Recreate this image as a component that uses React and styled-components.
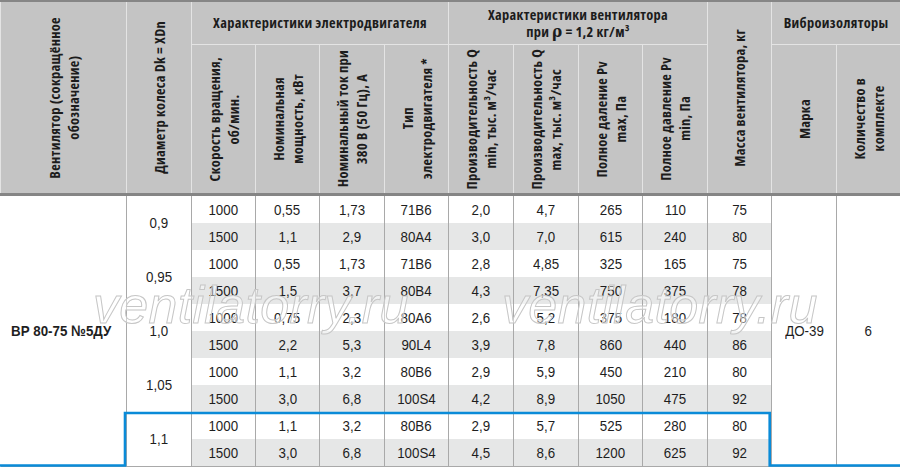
import React from 'react';
import styled, { createGlobalStyle } from 'styled-components';

const GlobalStyle = createGlobalStyle`
  html, body {
    margin: 0;
    padding: 0;
    background: #ffffff;
  }
  body {
    font-family: "Liberation Sans", Arial, sans-serif;
  }
`;

const Wrapper = styled.div`
  position: relative;
  width: 900px;
  height: 467px;
  overflow: hidden;
`;

const Table = styled.table`
  width: 900px;
  border-collapse: collapse;
  table-layout: fixed;
  border-top: 2px solid #868686;
`;

const HeadRow = styled.tr`
  height: ${p => p.$h}px;
`;

const HeadCell = styled.th`
  background: #c4c4c4;
  border: 1px solid #e4e4e4;
  border-top: none;
  padding: 0;
  color: #1c1c1c;
  font-family: "Open Sans", "Liberation Sans", sans-serif;
  font-stretch: 75%;
  font-weight: 700;
  font-size: 14.4px;
  letter-spacing: 0.3px;
  line-height: 17px;
  text-align: center;
  vertical-align: middle;
  border-bottom: ${p => (p.$last ? '3px solid #858585' : '1px solid #e4e4e4')};
`;

const VBox = styled.div`
  height: ${p => p.$h}px;
  display: flex;
  align-items: center;
  justify-content: center;
  overflow: hidden;
`;

const VText = styled.div`
  writing-mode: vertical-rl;
  transform: rotate(180deg);
  text-align: center;
  line-height: 19px;
  white-space: nowrap;
`;

const Rho = styled.span`
  font-size: 17px;
  font-family: "DejaVu Serif", serif;
`;

const Row = styled.tr`
  height: 27px;
`;

const Cell = styled.td`
  padding: 0;
  height: 27px;
  background: ${p => (p.$shade ? '#e6e7e7' : '#ffffff')};
  border-left: 1px solid #a9a9a9;
  border-right: 1px solid #a9a9a9;
  border-bottom: ${p => (p.$bottom ? '1px solid #a9a9a9' : 'none')};
  color: #1e1e1e;
  font-family: "Liberation Sans", Arial, sans-serif;
  font-size: 15.5px;
  text-align: center;
  vertical-align: middle;
  white-space: nowrap;
`;

const NameCell = styled(Cell)`
  text-align: left;
  padding-left: 10px;
  font-weight: 700;
  font-size: 15.5px;
  border-left: none;
`;

/* narrow face: the sheet uses a condensed Helvetica */
const Narrow = styled.span`
  display: inline-block;
  transform: scaleX(0.86);
  transform-origin: ${p => (p.$left ? 'left center' : 'center')};
`;

const Watermark = styled.div`
  position: absolute;
  top: 279px;
  left: ${p => p.$x}px;
  font-family: "Liberation Sans", Arial, sans-serif;
  font-style: italic;
  font-size: 52px;
  line-height: 1;
  letter-spacing: 0.3px;
  color: rgba(255, 255, 255, 0.45);
  -webkit-text-stroke: 1px #c6c6c6;
  pointer-events: none;
  white-space: nowrap;
`;

const Highlight = styled.svg`
  position: absolute;
  left: 0;
  top: 0;
  pointer-events: none;
`;

const widths = [126, 65, 64, 64, 65, 64, 65, 65, 64, 65, 64, 65, 64];

const groups = [
  ['0,9', [
    ['1000', '0,55', '1,73', '71B6', '2,0', '4,7', '265', '110', '75'],
    ['1500', '1,1', '2,9', '80A4', '3,0', '7,0', '615', '240', '80'],
  ]],
  ['0,95', [
    ['1000', '0,55', '1,73', '71B6', '2,8', '4,85', '325', '165', '75'],
    ['1500', '1,5', '3,7', '80B4', '4,3', '7,35', '750', '375', '78'],
  ]],
  ['1,0', [
    ['1000', '0,75', '2,3', '80A6', '2,6', '5,2', '375', '180', '78'],
    ['1500', '2,2', '5,3', '90L4', '3,9', '7,8', '860', '440', '86'],
  ]],
  ['1,05', [
    ['1000', '1,1', '3,2', '80B6', '2,9', '5,9', '450', '210', '80'],
    ['1500', '3,0', '6,8', '100S4', '4,2', '8,9', '1050', '475', '92'],
  ]],
  ['1,1', [
    ['1000', '1,1', '3,2', '80B6', '2,9', '5,7', '525', '280', '80'],
    ['1500', '3,0', '6,8', '100S4', '4,5', '8,6', '1200', '625', '92'],
  ]],
];

const subHeads = [
  ['Скорость вращения,', 'об/мин.'],
  ['Номинальная', 'мощность, кВт'],
  ['Номинальный ток при', '380 В (50 Гц), А'],
  ['Тип', 'электродвигателя *'],
  ['Производительность Q', 'min, тыс. м³/час'],
  ['Производительность Q', 'max, тыс. м³/час'],
  ['Полное даление Pv', 'max, Па'],
  ['Полное давление Pv', 'min, Па'],
];

const Lines = ({ lines, h }) => (
  <VBox $h={h}>
    <VText>
      {lines.map((l, i) => (
        <React.Fragment key={i}>
          {i > 0 && <br />}
          {l}
        </React.Fragment>
      ))}
    </VText>
  </VBox>
);

export default function App() {
  const total = groups.length * 2;
  return (
    <>
      <GlobalStyle />
      <Wrapper>
        <Table>
          <colgroup>
            {widths.map((w, i) => <col key={i} style={{ width: w }} />)}
          </colgroup>
          <thead>
            <HeadRow $h={43}>
              <HeadCell rowSpan={2} $last>
                <Lines h={191} lines={['Вентилятор (сокращённое', 'обозначение)']} />
              </HeadCell>
              <HeadCell rowSpan={2} $last>
                <Lines h={191} lines={['Диаметр колеса Dk = XDn']} />
              </HeadCell>
              <HeadCell colSpan={4}>Характеристики электродвигателя</HeadCell>
              <HeadCell colSpan={4}>
                Характеристики вентилятора<br />
                при <Rho>ρ</Rho> = 1,2 кг/м³
              </HeadCell>
              <HeadCell rowSpan={2} $last>
                <Lines h={191} lines={['Масса вентилятора, кг']} />
              </HeadCell>
              <HeadCell colSpan={2}>Виброизоляторы</HeadCell>
            </HeadRow>
            <HeadRow $h={148}>
              {subHeads.map((s, i) => (
                <HeadCell key={i} $last>
                  <Lines h={147} lines={s} />
                </HeadCell>
              ))}
              <HeadCell $last>
                <Lines h={147} lines={['Марка']} />
              </HeadCell>
              <HeadCell $last>
                <Lines h={147} lines={['Количество в', 'комплекте']} />
              </HeadCell>
            </HeadRow>
          </thead>
          <tbody>
            {groups.map(([dia, rows], gi) =>
              rows.map((r, ri) => {
                const idx = gi * 2 + ri;
                const last = idx === total - 1;
                return (
                  <Row key={idx}>
                    {idx === 0 && (
                      <NameCell rowSpan={total} $bottom>
                        <Narrow $left>ВР 80-75 №5ДУ</Narrow>
                      </NameCell>
                    )}
                    {ri === 0 && (
                      <Cell rowSpan={2} $bottom={gi === groups.length - 1}>
                        <Narrow>{dia}</Narrow>
                      </Cell>
                    )}
                    {r.map((v, ci) => (
                      <Cell key={ci} $shade={ri === 1} $bottom={last}>
                        <Narrow>{v}</Narrow>
                      </Cell>
                    ))}
                    {idx === 0 && (
                      <>
                        <Cell rowSpan={total} $bottom><Narrow>ДО-39</Narrow></Cell>
                        <Cell rowSpan={total} $bottom><Narrow>6</Narrow></Cell>
                      </>
                    )}
                  </Row>
                );
              })
            )}
          </tbody>
        </Table>
        <Watermark $x={93}>ventilatorry.ru</Watermark>
        <Watermark $x={502}>ventilatorry.ru</Watermark>
        <Highlight width="900" height="467" viewBox="0 0 900 467">
          <polyline
            points="0,465.5 125,465.5 125,413 769.7,413 769.7,465.5 900,465.5"
            fill="none"
            stroke="#0a8bd8"
            strokeWidth="2.6"
          />
        </Highlight>
      </Wrapper>
    </>
  );
}
